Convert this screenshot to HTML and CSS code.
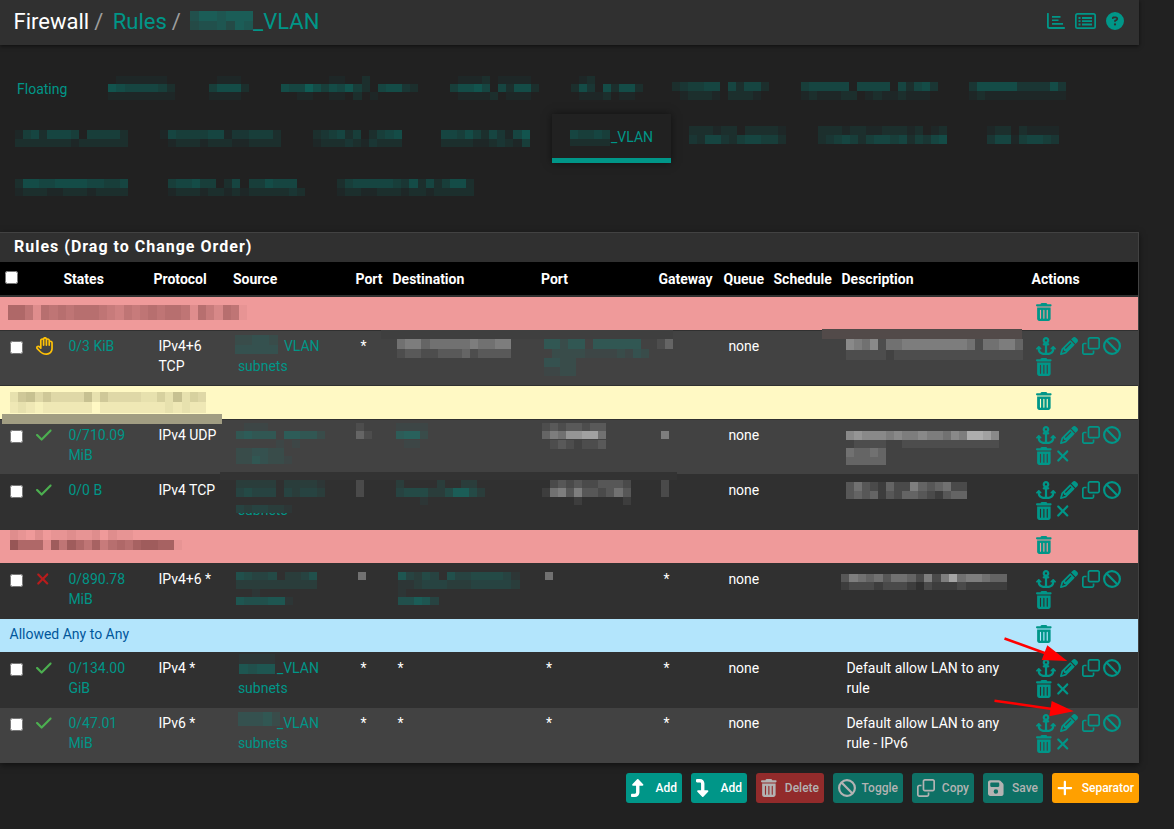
FILE: index.html
```html
<!DOCTYPE html>
<html lang="en">
<head>
<meta charset="UTF-8">
<meta name="viewport" content="width=device-width, initial-scale=1.0">
<title>Firewall: Rules</title>
<link rel="stylesheet" href="styles.css">
</head>
<body>

<svg class="sprite">
    <symbol id="anchor" viewBox="0 0 576 512"><path d="M320 96a32 32 0 1 1 -64 0 32 32 0 1 1 64 0zm21.1 80C367 158.8 384 129.4 384 96c0-53-43-96-96-96s-96 43-96 96c0 33.4 17 62.8 42.9 80H224c-17.7 0-32 14.3-32 32s14.3 32 32 32h32V448H208c-53 0-96-43-96-96v-6.1l7 7c9.4 9.4 24.6 9.4 33.9 0s9.4-24.6 0-33.9L97 263c-9.4-9.4-24.6-9.4-33.9 0L7 319c-9.4 9.4-9.4 24.6 0 33.9s24.6 9.4 33.9 0l7-7V352c0 88.4 71.6 160 160 160h80 80c88.4 0 160-71.6 160-160v-6.1l7 7c9.4 9.4 24.6 9.4 33.9 0s9.4-24.6 0-33.9l-56-56c-9.4-9.4-24.6-9.4-33.9 0l-56 56c-9.4 9.4-9.4 24.6 0 33.9s24.6 9.4 33.9 0l7-7V352c0 53-43 96-96 96H320V240h32c17.7 0 32-14.3 32-32s-14.3-32-32-32H341.1z"/></symbol>
    <symbol id="pencil" viewBox="0 0 512 512"><path d="M410.3 231l11.3-11.3-33.9-33.9-62.1-62.1L291.7 89.8l-11.3 11.3-22.6 22.6L58.6 322.9c-10.4 10.4-18 23.3-22.2 37.4L1 480.7c-2.5 8.4-.2 17.5 6.1 23.7s15.3 8.5 23.7 6.1l120.3-35.4c14.1-4.2 27-11.8 37.4-22.2L387.7 253.7 410.3 231zM160 399.4l-9.1 22.7c-4 3.1-8.5 5.4-13.3 6.9L59.4 452l23-78.1c1.4-4.9 3.8-9.4 6.9-13.3l22.7-9.1v32c0 8.8 7.2 16 16 16h32zM362.7 18.7L348.3 33.2 325.7 55.8 314.3 67.1l33.9 33.9 62.1 62.1 33.9 33.9 11.3-11.3 22.6-22.6 14.5-14.5c25-25 25-65.5 0-90.5L453.3 18.7c-25-25-65.5-25-90.5 0zm-47.4 168l-144 144c-6.2 6.2-16.4 6.2-22.6 0s-6.2-16.4 0-22.6l144-144c6.2-6.2 16.4-6.2 22.6 0s6.2 16.4 0 22.6z"/></symbol>
    <symbol id="clone" viewBox="0 0 512 512"><path d="M64 464H288c8.8 0 16-7.2 16-16V384h48v64c0 35.3-28.7 64-64 64H64c-35.3 0-64-28.7-64-64V224c0-35.3 28.7-64 64-64h64v48H64c-8.8 0-16 7.2-16 16V448c0 8.8 7.2 16 16 16zM224 304H448c8.8 0 16-7.2 16-16V64c0-8.8-7.2-16-16-16H224c-8.8 0-16 7.2-16 16V288c0 8.8 7.2 16 16 16zm-64-16V64c0-35.3 28.7-64 64-64H448c35.3 0 64 28.7 64 64V288c0 35.3-28.7 64-64 64H224c-35.3 0-64-28.7-64-64z"/></symbol>
    <symbol id="ban" viewBox="0 0 512 512"><path d="M367.2 412.5L99.5 144.8C77.1 176.1 64 214.5 64 256c0 106 86 192 192 192c41.5 0 79.9-13.1 111.2-35.5zm45.3-45.3C434.9 335.9 448 297.5 448 256c0-106-86-192-192-192c-41.5 0-79.9 13.1-111.2 35.5L412.5 367.2zM0 256a256 256 0 1 1 512 0A256 256 0 1 1 0 256z"/></symbol>
    <symbol id="trash" viewBox="0 0 448 512"><path d="M135.2 17.7C140.6 6.8 151.7 0 163.8 0H284.2c12.1 0 23.2 6.8 28.6 17.7L320 32h96c17.7 0 32 14.3 32 32s-14.3 32-32 32H32C14.3 96 0 81.7 0 64S14.3 32 32 32h96l7.2-14.3zM32 128H416V448c0 35.3-28.7 64-64 64H96c-35.3 0-64-28.7-64-64V128zm96 64c-8.8 0-16 7.2-16 16V432c0 8.8 7.2 16 16 16s16-7.2 16-16V208c0-8.8-7.2-16-16-16zm96 0c-8.8 0-16 7.2-16 16V432c0 8.8 7.2 16 16 16s16-7.2 16-16V208c0-8.8-7.2-16-16-16zm96 0c-8.8 0-16 7.2-16 16V432c0 8.8 7.2 16 16 16s16-7.2 16-16V208c0-8.8-7.2-16-16-16z"/></symbol>
    <symbol id="xmark" viewBox="0 0 384 512"><path d="M342.6 150.6c12.5-12.5 12.5-32.8 0-45.3s-32.8-12.5-45.3 0L192 210.7 86.6 105.4c-12.5-12.5-32.8-12.5-45.3 0s-12.5 32.8 0 45.3L146.7 256 41.4 361.4c-12.5 12.5-12.5 32.8 0 45.3s32.8 12.5 45.3 0L192 301.3 297.4 406.6c12.5 12.5 32.8 12.5 45.3 0s12.5-32.8 0-45.3L237.3 256 342.6 150.6z"/></symbol>
    <symbol id="check" viewBox="0 0 448 512"><path d="M438.6 105.4c12.5 12.5 12.5 32.8 0 45.3l-256 256c-12.5 12.5-32.8 12.5-45.3 0l-128-128c-12.5-12.5-12.5-32.8 0-45.3s32.8-12.5 45.3 0L160 338.7 393.4 105.4c12.5-12.5 32.8-12.5 45.3 0z"/></symbol>
    <symbol id="hand" viewBox="0 0 512 512"><path d="M256 0c-25.3 0-47.2 14.7-57.6 36c-7-2.6-14.5-4-22.4-4c-35.3 0-64 28.7-64 64V261.5l-2.7-2.7c-25-25-65.5-25-90.5 0s-25 65.5 0 90.5L106.5 437c48 48 113.1 75 181 75H296h8c1.5 0 3-.1 4.5-.4c91.7-6.2 165-79.4 171.1-171.1c.3-1.5 .4-3 .4-4.5V160c0-35.3-28.7-64-64-64c-5.5 0-10.9 .7-16 2V96c0-35.3-28.7-64-64-64c-7.9 0-15.4 1.4-22.4 4C303.2 14.7 281.3 0 256 0zM240 96.1c0 0 0-.1 0-.1V64c0-8.8 7.2-16 16-16s16 7.2 16 16V95.9c0 0 0 .1 0 .1V232c0 13.3 10.7 24 24 24s24-10.7 24-24V96c0 0 0 0 0-.1c0-8.8 7.2-16 16-16s16 7.2 16 16v55.9c0 0 0 .1 0 .1v80c0 13.3 10.7 24 24 24s24-10.7 24-24V160.1c0 0 0-.1 0-.1c0-8.8 7.2-16 16-16s16 7.2 16 16V332.9c-.1 .6-.1 1.3-.2 1.9c-3.4 69.7-59.3 125.6-129 129c-.6 0-1.3 .1-1.9 .2H296h-8.5c-55.2 0-108.1-21.9-147.1-60.9L52.7 315.3c-6.2-6.2-6.2-16.4 0-22.6s16.4-6.2 22.6 0L119 336.4c6.9 6.9 17.2 8.9 26.2 5.2s14.8-12.5 14.8-22.2V96c0-8.8 7.2-16 16-16c8.8 0 16 7.1 16 15.9V232c0 13.3 10.7 24 24 24s24-10.7 24-24V96.1z"/></symbol>
    <symbol id="turn-up" viewBox="0 0 384 512"><path d="M350 177.5c3.8-8.8 2-19-4.6-26l-136-144C204.9 2.7 198.6 0 192 0s-12.9 2.7-17.4 7.5l-136 144c-6.6 7-8.4 17.2-4.6 26s12.5 14.5 22 14.5h88l0 192c0 17.7-14.3 32-32 32H32c-17.7 0-32 14.3-32 32v32c0 17.7 14.3 32 32 32l80 0c70.7 0 128-57.3 128-128l0-192h88c9.6 0 18.2-5.7 22-14.5z"/></symbol>
    <symbol id="turn-down" viewBox="0 0 384 512"><path d="M350 334.5c3.8 8.8 2 19-4.6 26l-136 144c-4.5 4.8-10.8 7.5-17.4 7.5s-12.9-2.7-17.4-7.5l-136-144c-6.6-7-8.4-17.2-4.6-26s12.5-14.5 22-14.5h88l0-192c0-17.7-14.3-32-32-32H32C14.3 96 0 81.7 0 64V32C0 14.3 14.3 0 32 0l80 0c70.7 0 128 57.3 128 128l0 192h88c9.6 0 18.2 5.7 22 14.5z"/></symbol>
    <symbol id="save" viewBox="0 0 448 512"><path d="M64 32C28.7 32 0 60.7 0 96V416c0 35.3 28.7 64 64 64H384c35.3 0 64-28.7 64-64V173.3c0-17-6.7-33.3-18.7-45.3L352 50.7C340 38.7 323.7 32 306.7 32H64zm0 96c0-17.7 14.3-32 32-32H288c17.7 0 32 14.3 32 32v64c0 17.7-14.3 32-32 32H96c-17.7 0-32-14.3-32-32V128zM224 288a64 64 0 1 1 0 128 64 64 0 1 1 0-128z"/></symbol>
    <symbol id="plus" viewBox="0 0 448 512"><path d="M256 80c0-17.7-14.3-32-32-32s-32 14.3-32 32V224H48c-17.7 0-32 14.3-32 32s14.3 32 32 32H192V432c0 17.7 14.3 32 32 32s32-14.3 32-32V288H400c17.7 0 32-14.3 32-32s-14.3-32-32-32H256V80z"/></symbol>
    <symbol id="question" viewBox="0 0 512 512"><path d="M256 512A256 256 0 1 0 256 0a256 256 0 1 0 0 512zM169.8 165.3c7.9-22.3 29.1-37.3 52.8-37.3h58.3c34.9 0 63.1 28.3 63.1 63.1c0 22.6-12.1 43.5-31.7 54.8L280 264.4c-.2 13-10.9 23.6-24 23.6c-13.3 0-24-10.7-24-24V250.5c0-8.6 4.6-16.5 12.1-20.8l44.3-25.4c4.7-2.7 7.6-7.7 7.6-13.1c0-8.4-6.8-15.1-15.1-15.1H222.6c-3.4 0-6.4 2.1-7.5 5.3l-.4 1.2c-4.4 12.5-18.2 19-30.6 14.6s-19-18.2-14.6-30.6l.4-1.2zM224 352a32 32 0 1 1 64 0 32 32 0 1 1 -64 0z"/></symbol>
    <symbol id="chart" viewBox="0 0 18 16"><path d="M0 0.8a.9.9 0 0 1 1.8 0V13.2q0 .9.9.9H17.2a.9.9 0 0 1 0 1.8H2.5Q0 15.900 0 13.400zM5 3h8.500v1.800H5zM5 6.600h6.500v1.400H5zM5 10h11v1.700H5z"/></symbol>
    <symbol id="list" viewBox="0 0 21 16"><path fill-rule="evenodd" d="M2.500 0h16Q21 0 21 2.500v11Q21 16 18.500 16h-16Q0 16 0 13.500v-11Q0 0 2.500 0zM2.600 1.700q-.9 0-.9.9v10.800q0 .9.9.9h15.800q.9 0 .9-.9V2.600q0-.9-.9-.9zM3.500 4h2v2h-2zM7 4h10v2H7zM3.500 7.200h2v1.800h-2zM7 7.200h10v1.800H7zM3.500 10.500h2v2h-2zM7 10.500h10v2H7z"/></symbol>
</svg>

<div class="page">
    <header class="topbar">
        <ol class="breadcrumb">
            <li>Firewall</li>
            <li><a href="#">Rules</a></li>
            <li><a href="#"><svg class="mosaic" width="63" data-cw="9" data-px="-1,10,5776777;9,9,4556476"></svg>_VLAN</a></li>
        </ol>
        <div class="tools">
            <a href="#"><svg class="t-chart"><use href="#chart"/></svg></a>
            <a href="#"><svg class="t-list"><use href="#list"/></svg></a>
            <a href="#"><svg class="t-help"><use href="#question"/></svg></a>
        </div>
    </header>

    <nav class="tabs">
        <ul class="first">
            <li><a href="#">Floating</a></li>
            <li><svg class="mosaic" width="78" data-x="9" data-cw="8.4" data-px="1,8,01111110;9,8,76555542;17,8,11111111"></svg></li>
            <li><svg class="mosaic" width="40" data-px="1,8,01110;9,8,46662;17,8,11110"></svg></li>
            <li><svg class="mosaic" width="137" data-px="1,8,00000011002000000;9,8,65586465742056632;17,8,00110011020100000"></svg></li>
            <li><svg class="mosaic" width="89" data-px="1,8,01112011110;9,8,46675052662;17,8,01111201110"></svg></li>
            <li><svg class="mosaic" width="69" data-px="1,8,012000000;9,8,263062662;17,8,011120110"></svg></li>
            <li><svg class="mosaic" width="97" data-px="7,9,234455052552;16,9,012221022210"></svg></li>
            <li><svg class="mosaic" width="136" data-px="7,9,45555505555052563;16,9,12111220121121110"></svg></li>
            <li><svg class="mosaic" width="97" data-px="7,9,366666333363;16,9,121111111111"></svg></li>
        </ul>
        <ul>
            <li><svg class="mosaic" width="113" data-px="6,9,14525554044442;15,8,22222221222222"></svg></li>
            <li><svg class="mosaic" width="121" data-px="6,9,154444551334442;15,8,012221222112222"></svg></li>
            <li><svg class="mosaic" width="96" data-px="6,9,234524024560;15,8,122232132220"></svg></li>
            <li><svg class="mosaic" width="97" data-px="6,9,55464253157;15,8,22221123214"></svg></li>
            <li class="active"><a href="#"><svg class="mosaic" width="41" data-px="6,9,54454;15,7,22222"></svg>_VLAN</a></li>
            <li><svg class="mosaic" width="102" data-x="5" data-px="2,9,222122022221;11,9,325532455442"></svg></li>
            <li><svg class="mosaic" width="128" data-px="2,9,2221221122212012;11,9,2345424554524356"></svg></li>
            <li><svg class="mosaic" width="80" data-x="9" data-px="2,9,122021111;11,9,355145543"></svg></li>
        </ul>
        <ul>
            <li><svg class="mosaic" width="121" data-px="6,9,26655666655445;15,8,12221122212222"></svg></li>
            <li><svg class="mosaic" width="137" data-px="6,9,45564402504465550;15,8,12221221212222232"></svg></li>
            <li><svg class="mosaic" width="137" data-px="6,9,24555554362524662;15,8,12211222122122222"></svg></li>
        </ul>
    </nav>

    <section class="panel">
        <h2>Rules (Drag to Change Order)</h2>
        <table>
            <colgroup>
                <col class="c-check"><col class="c-icon"><col class="c-states"><col class="c-proto"><col class="c-source"><col class="c-port"><col class="c-dest"><col class="c-dport"><col class="c-gw"><col class="c-queue"><col class="c-sched"><col class="c-desc"><col class="c-act">
            </colgroup>
            <thead>
                <tr>
                    <th><input type="checkbox"></th><th></th><th>States</th><th>Protocol</th><th>Source</th><th>Port</th><th>Destination</th><th>Port</th><th>Gateway</th><th>Queue</th><th>Schedule</th><th>Description</th><th>Actions</th>
                </tr>
            </thead>
            <tbody>
                <tr class="sep red">
                    <td colspan="12"><svg class="mosaic" width="247" data-x="-2" data-cw="8.25" data-px="3,15,886276767776546567677627537610"></svg></td>
                    <td><svg class="icon w-trash"><use href="#trash"/></svg></td>
                </tr>
                <tr class="odd">
                    <td><input type="checkbox"></td>
                    <td><svg class="icon yellow"><use href="#hand"/></svg></td>
                    <td><a href="#">0/3 KiB</a></td>
                    <td>IPv4+6<br>TCP</td>
                    <td><a href="#"><svg class="mosaic" width="46" data-x="-3" data-cw="8.6" data-px="-1,10,22332;9,9,33333"></svg>VLAN<br>subnets</a></td>
                    <td>*</td>
                    <td><svg class="mosaic grey" width="100" data-cw="8.14" data-px="3,10,45534444454455;13,9,12211222312222"></svg></td>
                    <td><svg class="mosaic" width="90" data-x="-2" data-cw="8.1" data-px="3,10,442440444444;13,9,0222211112132;22,9,3322;31,9,1122"></svg></td>
                    <td><svg class="mosaic grey" width="16" data-x="-6" data-px="3,10,13"></svg></td>
                    <td>none</td>
                    <td></td>
                    <td><svg class="mosaic grey" width="160" data-px="3,11,6546144555555554144553;14,10,1111101111111111111111"></svg></td>
                    <td class="actions">
                        <svg class="icon w-anchor"><use href="#anchor"/></svg><svg class="icon"><use href="#pencil"/></svg><svg class="icon"><use href="#clone"/></svg><svg class="icon"><use href="#ban"/></svg><br><svg class="icon w-trash"><use href="#trash"/></svg>
                    </td>
                </tr>
                <tr class="sep yellow-bg">
                    <td colspan="12"><svg class="mosaic" width="196" data-cw="8.17" data-px="1,10,367464444736444433537354;11,11,232122222202222222232322"></svg></td>
                    <td><svg class="icon w-trash"><use href="#trash"/></svg></td>
                </tr>
                <tr class="odd">
                    <td><input type="checkbox"></td>
                    <td><svg class="icon w-trash green"><use href="#check"/></svg></td>
                    <td><a href="#">0/710.09<br>MiB</a></td>
                    <td>IPv4 UDP</td>
                    <td><svg class="mosaic" width="80" data-x="-2" data-px="-2,8,01110000000;6,8,45444055442;15,8,00000101000;23,8,2233220;31,8,2243221"></svg></td>
                    <td><svg class="mosaic grey" width="16" data-x="-4" data-px="-2,8,1;6,8,31"></svg></td>
                    <td><svg class="mosaic" width="32" data-x="-1" data-px="-2,8,1111;6,8,5662;15,8,0110"></svg></td>
                    <td><svg class="mosaic grey" width="64" data-x="-4" data-px="-2,8,12122122;6,8,35477884;15,9,01210112"></svg></td>
                    <td><svg class="mosaic grey" width="8" data-x="-2" data-px="6,8,5"></svg></td>
                    <td>none</td>
                    <td></td>
                    <td><svg class="mosaic grey" width="152" data-px="6,9,6766656556554659986;15,8,0111100111111111111;23,9,43343;32,8,33333"></svg></td>
                    <td class="actions">
                        <svg class="icon w-anchor"><use href="#anchor"/></svg><svg class="icon"><use href="#pencil"/></svg><svg class="icon"><use href="#clone"/></svg><svg class="icon"><use href="#ban"/></svg><br><svg class="icon w-trash"><use href="#trash"/></svg><svg class="icon w-x"><use href="#xmark"/></svg>
                    </td>
                </tr>
                <tr>
                    <td><input type="checkbox"></td>
                    <td><svg class="icon w-trash green"><use href="#check"/></svg></td>
                    <td><a href="#">0/0 B</a></td>
                    <td>IPv4 TCP</td>
                    <td><svg class="mosaic" width="80" data-x="-2" data-px="0,8,22222022221;8,9,34333032332;25,8,3233221"></svg><br><a href="#" class="clipped">subnets</a></td>
                    <td><svg class="mosaic grey" width="16" data-x="-4" data-px="0,8,2;8,9,2"></svg></td>
                    <td><svg class="mosaic" width="90" data-x="-1" data-cw="8.1" data-px="0,8,20000200220;8,9,34442247742;17,8,0001"></svg></td>
                    <td><svg class="mosaic grey" width="90" data-x="-4" data-px="0,8,02323223332;8,9,15636332353;17,8,00001000001"></svg></td>
                    <td><svg class="mosaic grey" width="8" data-x="-2" data-px="0,8,2;8,9,2"></svg></td>
                    <td>none</td>
                    <td></td>
                    <td><svg class="mosaic grey" width="120" data-px="2,9,353214226434522;11,8,343413244321344"></svg></td>
                    <td class="actions">
                        <svg class="icon w-anchor"><use href="#anchor"/></svg><svg class="icon"><use href="#pencil"/></svg><svg class="icon"><use href="#clone"/></svg><svg class="icon"><use href="#ban"/></svg><br><svg class="icon w-trash"><use href="#trash"/></svg><svg class="icon w-x"><use href="#xmark"/></svg>
                    </td>
                </tr>
                <tr class="sep red">
                    <td colspan="12"><svg class="mosaic" width="172" data-cw="8.2" data-px="-5,10,210201121120211;5,10,b8882a6a86957879aa991"></svg></td>
                    <td><svg class="icon w-trash"><use href="#trash"/></svg></td>
                </tr>
                <tr>
                    <td><input type="checkbox"></td>
                    <td><svg class="icon w-x crimson"><use href="#xmark"/></svg></td>
                    <td><a href="#">0/890.78<br>MiB</a></td>
                    <td>IPv4+6 *</td>
                    <td><svg class="mosaic" width="80" data-x="-2" data-cw="8.1" data-px="3,8,5433402235;11,9,2222222222;20,8,0010000000;28,8,6555661"></svg></td>
                    <td><svg class="mosaic grey" width="8" data-x="-2" data-px="3,8,5"></svg></td>
                    <td><svg class="mosaic" width="90" data-x="1" data-cw="8.1" data-px="3,8,632430533444431;11,9,112333222333332;20,8,1;28,8,55763"></svg></td>
                    <td><svg class="mosaic grey" width="8" data-x="-1" data-px="3,8,5"></svg></td>
                    <td>*</td>
                    <td>none</td>
                    <td></td>
                    <td><svg class="mosaic grey" width="160" data-x="-5" data-cw="8.3" data-px="5,8,36545355426269566544;13,8,12221222102111211111"></svg></td>
                    <td class="actions">
                        <svg class="icon w-anchor"><use href="#anchor"/></svg><svg class="icon"><use href="#pencil"/></svg><svg class="icon"><use href="#clone"/></svg><svg class="icon"><use href="#ban"/></svg><br><svg class="icon w-trash"><use href="#trash"/></svg>
                    </td>
                </tr>
                <tr class="sep blue">
                    <td colspan="12">Allowed Any to Any</td>
                    <td><svg class="icon w-trash"><use href="#trash"/></svg></td>
                </tr>
                <tr>
                    <td><input type="checkbox"></td>
                    <td><svg class="icon w-trash green"><use href="#check"/></svg></td>
                    <td><a href="#">0/134.00<br>GiB</a></td>
                    <td>IPv4 *</td>
                    <td><a href="#"><svg class="mosaic" width="39" data-x="1" data-cw="9" data-px="-4,10,1111;6,10,6566"></svg>_VLAN<br>subnets</a></td>
                    <td>*</td>
                    <td>*</td>
                    <td>*</td>
                    <td>*</td>
                    <td>none</td>
                    <td></td>
                    <td>Default allow LAN to any rule</td>
                    <td class="actions">
                        <svg class="icon w-anchor"><use href="#anchor"/></svg><svg class="icon"><use href="#pencil"/></svg><svg class="icon"><use href="#clone"/></svg><svg class="icon"><use href="#ban"/></svg><br><svg class="icon w-trash"><use href="#trash"/></svg><svg class="icon w-x"><use href="#xmark"/></svg>
                    </td>
                </tr>
                <tr class="odd">
                    <td><input type="checkbox"></td>
                    <td><svg class="icon w-trash green"><use href="#check"/></svg></td>
                    <td><a href="#">0/47.01<br>MiB</a></td>
                    <td>IPv6 *</td>
                    <td><a href="#"><svg class="mosaic" width="39" data-cw="8.4" data-px="-1,14,33342"></svg>_VLAN<br>subnets</a></td>
                    <td>*</td>
                    <td>*</td>
                    <td>*</td>
                    <td>*</td>
                    <td>none</td>
                    <td></td>
                    <td>Default allow LAN to any rule - IPv6</td>
                    <td class="actions">
                        <svg class="icon w-anchor"><use href="#anchor"/></svg><svg class="icon"><use href="#pencil"/></svg><svg class="icon"><use href="#clone"/></svg><svg class="icon"><use href="#ban"/></svg><br><svg class="icon w-trash"><use href="#trash"/></svg><svg class="icon w-x"><use href="#xmark"/></svg>
                    </td>
                </tr>
            </tbody>
        </table>
    </section>

    <div class="buttons">
        <button class="btn b-add"><svg class="icon w-x"><use href="#turn-up"/></svg>Add</button>
        <button class="btn b-add"><svg class="icon w-x"><use href="#turn-down"/></svg>Add</button>
        <button class="btn b-delete danger off"><svg class="icon w-trash"><use href="#trash"/></svg>Delete</button>
        <button class="btn b-toggle off"><svg class="icon"><use href="#ban"/></svg>Toggle</button>
        <button class="btn b-copy off"><svg class="icon"><use href="#clone"/></svg>Copy</button>
        <button class="btn b-save off"><svg class="icon w-trash"><use href="#save"/></svg>Save</button>
        <button class="btn b-sep warning"><svg class="icon w-trash"><use href="#plus"/></svg>Separator</button>
    </div>
</div>

<!-- annotations drawn over the table -->
<svg class="notes" viewBox="0 0 1174 829">
    <rect x="381" y="330" width="292" height="9" fill="#3f3f3f"/>
    <rect x="822" y="329" width="200" height="10" fill="#524a49"/>
    <rect x="2" y="414" width="220" height="10" fill="#a19d82"/>
    <rect x="220" y="472" width="457" height="8" fill="#333333"/>
    <g fill="#ff0000" stroke="#ff0000">
        <path class="shaft" d="M1004.500 638.500L1046 653.500M994.500 700.700L1052 709"/>
        <path stroke="none" d="M1047.300 645.300L1067.300 661L1041.700 660zM1051.700 701L1073.700 711.300L1049.300 716.300z"/>
    </g>
</svg>

<script src="mosaic.js"></script>
</body>
</html>
```

FILE: styles.css
```css
body {
    margin: 0;
    height: 829px;
    overflow: hidden;
    position: relative;
    background-color: #212121;
    color: #fff;
    font-family: Roboto, "Liberation Sans", sans-serif;
    font-size: 14px;
    line-height: 20px;
}
a {
    color: #009688;
    text-decoration: none;
}
ul, ol {
    list-style: none;
    margin: 0;
    padding: 0;
}
.sprite {
    display: none;
}
.page {
    width: 1139px;
}

/* top bar */
.topbar {
    display: flex;
    justify-content: space-between;
    height: 45px;
    background-color: #303030;
    box-shadow: 0 1px 4px rgba(0, 0, 0, 0.6);
}
.breadcrumb {
    display: flex;
    padding: 12px 0 0 13.5px;
    font-size: 22px;
}
.breadcrumb li + li:before {
    content: "/";
    padding: 0 9.5px 0 5px;
    color: #9e9e9e;
}
.tools {
    display: flex;
    align-items: center;
    gap: 10px;
    padding: 0 15px 3px 0;
}
.tools svg {
    display: block;
    fill: #009688;
}
.t-chart { width: 18px; height: 16px; }
.t-list { width: 21px; height: 16px; }
.t-help { width: 18px; height: 18px; }

/* tabs */
.tabs {
    padding: 20px 0 20px 15px;
}
.tabs ul {
    display: flex;
    gap: 32px;
    height: 49px;
}
.tabs ul.first {
    padding-left: 2px;
}
.tabs li {
    display: flex;
    align-items: center;
    height: 44px;
    border-bottom: 5px solid transparent;
}
.tabs a {
    padding-top: 3px;
    display: flex;
    align-items: center;
}
.tabs .mosaic {
    height: 24px;
}
.tabs .active {
    padding: 0 18px;
    margin: 0 -19px 0 -18px;
    border-bottom-color: #009688;
    box-shadow: 0 0 8px rgba(0, 0, 0, 0.5);
}
.tabs .active a {
    width: 83px;
    padding-top: 2px;
}
.tabs .active .mosaic {
    margin-top: -2px;
}

/* pixelated names, cells are added by mosaic.js */
.mosaic {
    height: 20px;
    overflow: visible;
    vertical-align: top;
    fill: #009688;
}
.mosaic.grey {
    fill: #fff;
}
.red .mosaic {
    fill: #703838;
}
.yellow-bg .mosaic {
    fill: #807850;
}

/* rules */
.panel {
    border-top: 1px solid #424242;
    border-right: 1px solid #424242;
    background-color: #303030;
    box-shadow: 0 2px 6px rgba(0, 0, 0, 0.5);
}
.panel h2 {
    margin: 0;
    height: 29px;
    padding-left: 14px;
    line-height: 28px;
    font-size: 16px;
    font-weight: 700;
    letter-spacing: 1px;
}
table {
    width: 1138px;
    table-layout: fixed;
    border-collapse: separate;
    border-spacing: 0;
}
.c-check { width: 26px; }
.c-icon { width: 32px; }
.c-states { width: 90px; }
.c-proto { width: 79.5px; }
.c-source { width: 122.5px; }
.c-port { width: 37px; }
.c-dest { width: 148.5px; }
.c-dport { width: 117.5px; }
.c-gw { width: 65px; }
.c-queue { width: 50px; }
.c-sched { width: 68px; }
.c-desc { width: 190px; }
.c-act { width: 112px; }
th {
    box-sizing: border-box;
    height: 34px;
    padding: 1px 0 0 5.5px;
    border-bottom: 1px solid #303030;
    background-color: #000;
    text-align: left;
    font-weight: 700;
    white-space: nowrap;
}
td {
    box-sizing: border-box;
    height: 55px;
    padding: 5px 0 0 10.4px;
    border-top: 1px solid #303030;
    vertical-align: top;
}
td:nth-child(12) {
    padding-right: 20px;
}
.odd td {
    background-color: #424242;
}
tbody tr:last-child td {
    height: 56px;
}
.sep td {
    height: 34px;
}
.sep td:first-child {
    padding-left: 9.5px;
}
.red td { background-color: #ef9a9a; }
.yellow-bg td { background-color: #fff9c4; }
.blue td {
    background-color: #b3e5fc;
    color: #01579b;
}
input[type="checkbox"] {
    display: block;
    width: 13px;
    height: 13px;
    margin: 5px 0 0;
}
th input[type="checkbox"] {
    margin: 0 0 3px;
}
td:first-child {
    padding-left: 10px;
}
th:first-child {
    padding-left: 5px;
}
.clipped {
    display: inline-block;
    clip-path: inset(13px 0 0 0);
}
.icon {
    width: 18px;
    height: 18px;
    margin: 0.5px 3.6px 0 0;
    vertical-align: top;
    fill: #009688;
}
.w-anchor { width: 20px; }
.w-trash { width: 15.75px; }
.w-x { width: 13.5px; }
.yellow { fill: #fec107; }
.green { fill: #4caf50; }
.crimson { fill: #b71c1c; }
.actions {
    line-height: 21px;
}

/* buttons */
.buttons {
    display: flex;
    justify-content: flex-end;
    gap: 9px;
    padding-top: 10px;
}
.btn {
    display: flex;
    align-items: center;
    justify-content: space-between;
    box-sizing: border-box;
    height: 30px;
    padding: 0 5px;
    border: none;
    border-radius: 3px;
    background-color: #009688;
    color: #fff;
    font-family: inherit;
    font-size: 12px;
    font-weight: 500;
}
.btn .icon {
    margin: 0;
    fill: currentColor;
}
.btn.off {
    background-color: #0e7065;
    color: #b3b3b3;
}
.btn.danger { background-color: #922b2b; }
.btn.warning { background-color: #ffa000; }
.b-add { width: 56px; }
.b-delete { width: 68px; }
.b-toggle { width: 70px; }
.b-copy { width: 62px; }
.b-save { width: 60px; }
.b-sep { width: 87px; }

.notes {
    position: absolute;
    top: 0;
    left: 0;
    width: 1174px;
    height: 829px;
    pointer-events: none;
}
.shaft {
    stroke-width: 2.5;
}
```

FILE: mosaic.js
```js
// data-px holds "y,height,levels" strips, one hex level per cell
document.querySelectorAll('.mosaic').forEach(function (svg) {
    var x0 = parseFloat(svg.dataset.x || 0);
    var cw = parseFloat(svg.dataset.cw || 8.05);
    svg.dataset.px.split(';').forEach(function (strip) {
        var parts = strip.split(',');
        for (var i = 0; i < parts[2].length; i++) {
            var level = parseInt(parts[2][i], 16);
            if (!level) continue;
            var left = Math.round(x0 + i * cw);
            var rect = document.createElementNS('http://www.w3.org/2000/svg', 'rect');
            rect.setAttribute('x', left);
            rect.setAttribute('y', parts[0]);
            rect.setAttribute('width', Math.round(x0 + (i + 1) * cw) - left);
            rect.setAttribute('height', parts[1]);
            rect.setAttribute('fill-opacity', level * 0.063);
            rect.setAttribute('shape-rendering', 'crispEdges');
            svg.appendChild(rect);
        }
    });
});
```
